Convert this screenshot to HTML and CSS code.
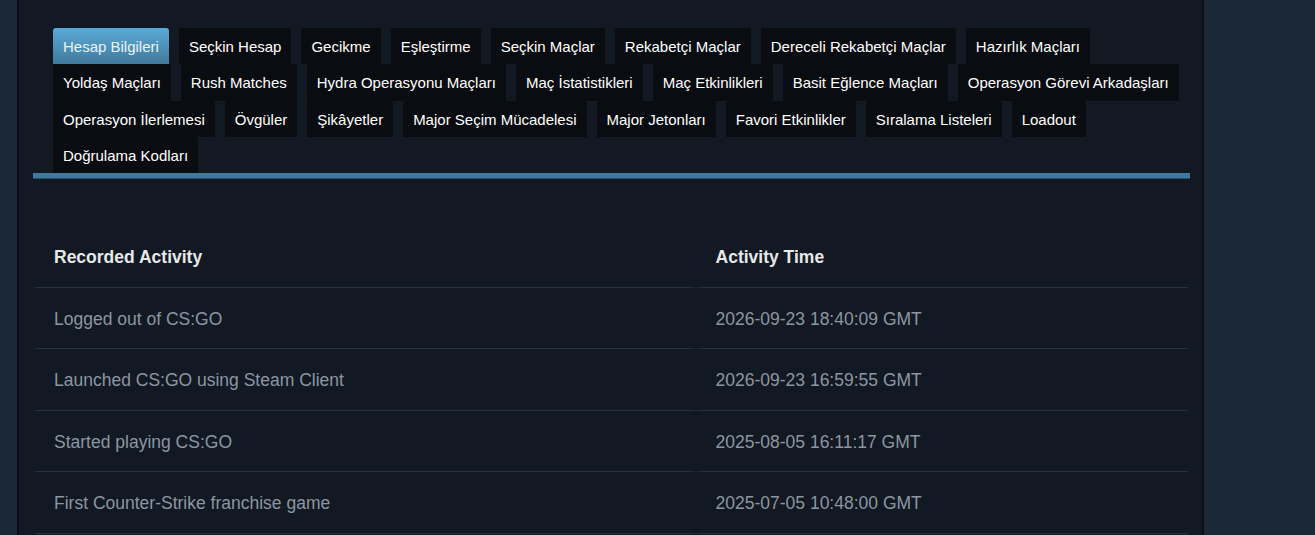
FILE: index.html
```html
<!DOCTYPE html>
<html lang="tr">
<head>
  <meta charset="UTF-8"/>
  <meta name="viewport" content="width=device-width,initial-scale=1"/>
  <title>Kişisel Oyun Verileri</title>
  <link rel="stylesheet" href="styles.css">
</head>
<body>
  <div class="page">
    <div class="tabs">
      <a class="tab active">Hesap Bilgileri</a>
      <a class="tab">Seçkin Hesap</a>
      <a class="tab">Gecikme</a>
      <a class="tab">Eşleştirme</a>
      <a class="tab">Seçkin Maçlar</a>
      <a class="tab">Rekabetçi Maçlar</a>
      <a class="tab">Dereceli Rekabetçi Maçlar</a>
      <a class="tab">Hazırlık Maçları</a>
      <a class="tab">Yoldaş Maçları</a>
      <a class="tab">Rush Matches</a>
      <a class="tab">Hydra Operasyonu Maçları</a>
      <a class="tab">Maç İstatistikleri</a>
      <a class="tab">Maç Etkinlikleri</a>
      <a class="tab">Basit Eğlence Maçları</a>
      <a class="tab">Operasyon Görevi Arkadaşları</a>
      <a class="tab">Operasyon İlerlemesi</a>
      <a class="tab">Övgüler</a>
      <a class="tab">Şikâyetler</a>
      <a class="tab">Major Seçim Mücadelesi</a>
      <a class="tab">Major Jetonları</a>
      <a class="tab">Favori Etkinlikler</a>
      <a class="tab">Sıralama Listeleri</a>
      <a class="tab">Loadout</a>
      <a class="tab">Doğrulama Kodları</a>
    </div>
    <div class="tab-line"></div>

    <table class="activity">
      <thead>
        <tr>
          <th class="col-act">Recorded Activity</th>
          <th>Activity Time</th>
        </tr>
      </thead>
      <tbody>
        <tr><td>Logged out of CS:GO</td><td>2026-09-23 18:40:09 GMT</td></tr>
        <tr><td>Launched CS:GO using Steam Client</td><td>2026-09-23 16:59:55 GMT</td></tr>
        <tr><td>Started playing CS:GO</td><td>2025-08-05 16:11:17 GMT</td></tr>
        <tr><td>First Counter-Strike franchise game</td><td>2025-07-05 10:48:00 GMT</td></tr>
      </tbody>
    </table>
  </div>
</body>
</html>
```
FILE: styles.css
```css
* {
  font-family: Arial, "Liberation Sans", sans-serif;
  box-sizing: border-box;
}
html, body {
  height: 100%;
}
body {
  margin: 0;
  background: #1b2838;
  overflow: hidden;
}
.page {
  margin-left: 17px;
  width: 1187px;
  min-height: 100%;
  background: #121923;
  border-left: 2px solid #0c1016;
  border-right: 2px solid #0c1016;
  padding: 28px 12px 0 14px;
}

/* tab strip */
.tabs {
  display: flex;
  flex-wrap: wrap;
  column-gap: 10px;
  padding: 0 10px 0 20px;
}
.tab {
  display: block;
  height: 36.33px;
  line-height: 35px;
  padding: 1px 10px 0;
  font-size: 15px;
  color: #fff;
  background: #090c10;
  border-radius: 3px 3px 0 0;
  white-space: nowrap;
  cursor: pointer;
}
.tab.active {
  background: linear-gradient(to bottom, #5aaad8, #417a9b);
  color: #eaf4fa;
}
.tab-line {
  height: 6px;
  background: #3f7a9d;
  border-bottom: 1px solid #284d64;
}

/* activity table */
.activity {
  width: 100%;
  margin-top: 46.7px;
  border-collapse: separate;
  border-spacing: 2px 0;
  font-size: 17.5px;
}
.activity th, .activity td {
  text-align: left;
  padding: 21px 19px 19px;
  line-height: 20.5px;
  border-bottom: 1px solid #233143;
}
.activity th {
  color: #e6e8ea;
  font-weight: bold;
}
.activity td {
  color: #8c96a0;
}
.col-act {
  width: 57.3%;
}
```
